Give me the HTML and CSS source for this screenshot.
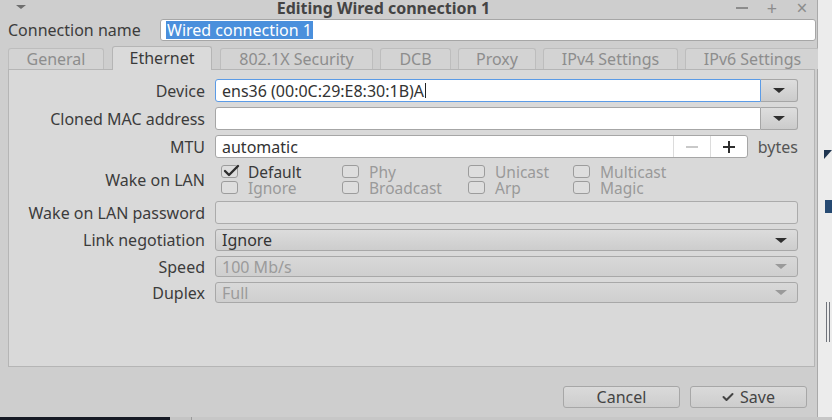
FILE: index.html
```html
<!DOCTYPE html>
<html>
<head>
<meta charset="utf-8">
<title>Editing Wired connection 1</title>
<link rel="stylesheet" href="styles.css">
</head>
<body>
<div class="screen">
  <div class="dialog">
    <div class="titlebar">
      <div class="tb-left"><span class="menu-arrow"></span></div>
      <div class="title">Editing Wired connection 1</div>
      <div class="wm-buttons">
        <span class="wm wm-min"></span>
        <span class="wm wm-max">+</span>
        <span class="wm wm-close">×</span>
      </div>
    </div>

    <div class="name-row">
      <span class="name-label">Connection name</span>
      <div class="entry name-entry"><span class="selected">Wired connection 1</span></div>
    </div>

    <div class="tabs">
      <div class="tab">General</div>
      <div class="tab active">Ethernet</div>
      <div class="tab">802.1X Security</div>
      <div class="tab">DCB</div>
      <div class="tab">Proxy</div>
      <div class="tab">IPv4 Settings</div>
      <div class="tab">IPv6 Settings</div>
    </div>

    <div class="panel">
      <div class="form">
        <div class="lbl">Device</div>
        <div class="combo-entry">
          <div class="entry focused">ens36 (00:0C:29:E8:30:1B)A<span class="caret"></span></div>
          <div class="combo-btn"><span class="arrow"></span></div>
        </div>

        <div class="lbl">Cloned MAC address</div>
        <div class="combo-entry">
          <div class="entry"></div>
          <div class="combo-btn"><span class="arrow"></span></div>
        </div>

        <div class="lbl">MTU</div>
        <div class="mtu">
          <div class="spin">
            <div class="spin-text">automatic</div>
            <div class="spin-btn minus"><span class="bar"></span></div>
            <div class="spin-btn plus"><span class="bar"></span><span class="bar vert"></span></div>
          </div>
          <span class="unit">bytes</span>
        </div>

        <div class="lbl">Wake on LAN</div>
        <div class="wol">
          <div class="chk on"><span class="box"><svg viewBox="0 0 18 14" width="18" height="14"><polyline points="3,7 7,11 16,2" fill="none" stroke="#2e2e2e" stroke-width="2.4" stroke-linecap="round" stroke-linejoin="round"/></svg></span>Default</div>
          <div class="chk"><span class="box"></span>Phy</div>
          <div class="chk"><span class="box"></span>Unicast</div>
          <div class="chk"><span class="box"></span>Multicast</div>
          <div class="chk"><span class="box"></span>Ignore</div>
          <div class="chk"><span class="box"></span>Broadcast</div>
          <div class="chk"><span class="box"></span>Arp</div>
          <div class="chk"><span class="box"></span>Magic</div>
        </div>

        <div class="lbl">Wake on LAN password</div>
        <div class="entry disabled"></div>

        <div class="lbl">Link negotiation</div>
        <div class="combo">Ignore<span class="arrow"></span></div>

        <div class="lbl">Speed</div>
        <div class="combo insensitive">100 Mb/s<span class="arrow"></span></div>

        <div class="lbl">Duplex</div>
        <div class="combo insensitive">Full<span class="arrow"></span></div>
      </div>
    </div>

    <div class="actions">
      <button class="btn">Cancel</button>
      <button class="btn"><svg class="save-check" viewBox="0 0 12 10" width="12" height="10"><polyline points="1.5,5 4.5,8 10.5,2" fill="none" stroke="#444" stroke-width="2" stroke-linecap="round" stroke-linejoin="round"/></svg>Save</button>
    </div>
  </div>

  <div class="side">
    <span class="side-tri"></span>
    <span class="side-block"></span>
    <span class="side-lines"></span>
  </div>
</div>
<div class="taskbar">
  <span class="tb-dark"></span>
  <span class="tb-gap"></span>
  <span class="tb-rest"></span>
</div>
</body>
</html>
```

FILE: styles.css
```css
html, body {
  margin: 0;
  padding: 0;
}

body {
  width: 832px;
  height: 420px;
  overflow: hidden;
  font-family: "Noto Sans", "Open Sans", sans-serif;
  font-size: 16px;
  color: #3a3a3a;
  background: #cfcfcf;
}

.screen {
  display: flex;
  height: 417px;
}

/* ---------- dialog frame ---------- */
.dialog {
  width: 818px;
  box-sizing: border-box;
  background: #cecece;
  border-right: 1px solid #a9a9a9;
  display: flex;
  flex-direction: column;
}

.titlebar {
  height: 16px;
  display: flex;
  align-items: flex-start;
}

.tb-left {
  width: 40px;
  height: 16px;
  padding-left: 16px;
  box-sizing: border-box;
  display: flex;
  align-items: center;
}

.menu-arrow {
  width: 0;
  height: 0;
  border-left: 5px solid transparent;
  border-right: 5px solid transparent;
  border-top: 4px solid #6e6e6e;
  margin-top: -3px;
}

.title {
  flex: 1;
  text-align: center;
  font-weight: bold;
  font-size: 16px;
  line-height: 16px;
  color: #444;
  white-space: nowrap;
}

.wm-buttons {
  width: 90px;
  height: 16px;
  display: flex;
  align-items: center;
}

.wm {
  width: 30px;
  text-align: center;
  color: #8c8c8c;
  font-size: 18px;
  line-height: 16px;
}

.wm-min {
  height: 2px;
  width: 12px;
  margin: 0 9px;
  background: #8c8c8c;
}

.wm-close {
  font-size: 19px;
}

/* ---------- connection name ---------- */
.name-row {
  display: flex;
  align-items: center;
  margin-top: 3px;
  padding-left: 8px;
  height: 22px;
}

.name-label {
  width: 152px;
  color: #3c3c3c;
}

.entry {
  box-sizing: border-box;
  height: 100%;
  background: #ffffff;
  border: 1px solid #a6a6a6;
  border-radius: 3px;
  padding: 0 6px;
  display: flex;
  align-items: center;
  color: #333;
  white-space: nowrap;
}

.name-entry {
  width: 656px;
  padding-left: 5px;
}

.selected {
  background: #4a8fdc;
  color: #ffffff;
  line-height: 18px;
  padding: 0 1px;
}

/* ---------- tabs ---------- */
.tabs {
  margin-top: 5px;
  height: 23px;
  padding-left: 8px;
  display: grid;
  grid-template-columns: 96px 100px 153px 70px 77px 134px 134px;
  column-gap: 8px;
  align-items: end;
}

.tabs .tab:nth-child(n+4) {
  margin-left: -1px;
}

.tab {
  box-sizing: border-box;
  height: 21px;
  background: #d3d3d3;
  border: 1px solid #bdbdbd;
  border-bottom: none;
  border-radius: 3px 3px 0 0;
  text-align: center;
  line-height: 20px;
  color: #8d8d8d;
}

.tab.active {
  height: 24px;
  background: #dadada;
  border-color: #b5b5b5;
  color: #3a3a3a;
  line-height: 23px;
  position: relative;
  z-index: 1;
  margin-bottom: -1px;
}

/* ---------- page panel ---------- */
.panel {
  flex: 1;
  margin-left: 8px;
  width: 807px;
  box-sizing: border-box;
  background: #d9d9d9;
  border: 1px solid #b5b5b5;
  padding: 9px 16px 0 0;
}

.form {
  display: grid;
  grid-template-columns: 196px 583px;
  grid-template-rows: 23px 23px 23px 33px 23px 22px 21px 21px;
  column-gap: 10px;
  row-gap: 5px;
}

.lbl {
  text-align: right;
  align-self: center;
  color: #3c3c3c;
  white-space: nowrap;
}

.combo-entry {
  display: flex;
}

.combo-entry .entry {
  flex: 1;
  border-radius: 3px 0 0 3px;
}

.entry.focused {
  border-color: #5b9be6;
}

.caret {
  display: inline-block;
  width: 1px;
  height: 15px;
  background: #222;
  margin-left: 1px;
}

.combo-btn {
  width: 37px;
  box-sizing: border-box;
  border: 1px solid #a6a6a6;
  border-left: none;
  border-radius: 0 3px 3px 0;
  background: linear-gradient(#dedede, #cbcbcb);
  display: flex;
  align-items: center;
  justify-content: center;
}

.arrow {
  width: 0;
  height: 0;
  border-left: 6px solid transparent;
  border-right: 6px solid transparent;
  border-top: 5px solid #2f2f2f;
}

/* ---------- MTU spin button ---------- */
.mtu {
  display: flex;
  align-items: center;
}

.spin {
  width: 534px;
  height: 100%;
  box-sizing: border-box;
  display: flex;
  background: #fff;
  border: 1px solid #a6a6a6;
  border-radius: 3px;
}

.spin-text {
  flex: 1;
  padding-left: 6px;
  display: flex;
  align-items: center;
  color: #333;
}

.spin-btn {
  width: 36px;
  border-left: 1px solid #dcdcdc;
  position: relative;
}

.spin-btn .bar {
  position: absolute;
  left: 12px;
  top: 10px;
  width: 12px;
  height: 2px;
  background: #2e2e2e;
}

.spin-btn .bar.vert {
  left: 17px;
  top: 5px;
  width: 2px;
  height: 12px;
}

.spin-btn.minus .bar {
  background: #c9c9c9;
}

.unit {
  margin-left: 10px;
  color: #555;
}

/* ---------- wake on LAN checks ---------- */
.wol {
  display: grid;
  grid-template-columns: 121px 126px 105px auto;
  grid-template-rows: 16px 16px;
  padding-left: 6px;
  align-content: center;
}

.chk {
  display: flex;
  align-items: center;
  color: #9a9a9a;
  white-space: nowrap;
  font-size: 15.5px;
  line-height: 16px;
}

.chk.on {
  color: #3a3a3a;
}

.box {
  box-sizing: border-box;
  width: 17px;
  height: 13px;
  border: 1px solid #9c9c9c;
  border-radius: 3px;
  background: #dedede;
  margin-right: 10px;
  position: relative;
  flex: none;
}

.box svg {
  position: absolute;
  left: 0;
  top: -2px;
}

/* ---------- insensitive widgets ---------- */
.entry.disabled {
  background: #dfdfdf;
  border-color: #ababab;
}

.combo {
  box-sizing: border-box;
  border: 1px solid #a8a8a8;
  border-radius: 3px;
  background: linear-gradient(#dcdcdc, #cdcdcd);
  display: flex;
  align-items: center;
  justify-content: space-between;
  padding: 0 10px 0 6px;
  color: #333;
}

.combo.insensitive {
  color: #9b9b9b;
  background: linear-gradient(#d8d8d8, #cfcfcf);
}

.combo.insensitive .arrow {
  border-top-color: #9a9a9a;
}

/* ---------- dialog buttons ---------- */
.actions {
  height: 50px;
  box-sizing: border-box;
  padding: 19px 10px 0 0;
  display: flex;
  justify-content: flex-end;
  align-items: flex-start;
  column-gap: 10px;
}

.btn {
  width: 117px;
  height: 22px;
  box-sizing: border-box;
  border: 1px solid #a7a7a7;
  border-radius: 3px;
  background: linear-gradient(#dadada, #cdcdcd);
  font: inherit;
  color: #444;
  display: flex;
  align-items: center;
  justify-content: center;
  padding: 0;
}

.save-check {
  margin-right: 6px;
}

/* ---------- desktop behind the dialog ---------- */
.side {
  flex: 1;
  background: #ececec;
  position: relative;
}

.side-tri {
  position: absolute;
  left: 6px;
  top: 150px;
  width: 0;
  height: 0;
  border-left: 8px solid #1f3550;
  border-bottom: 9px solid transparent;
}

.side-block {
  position: absolute;
  left: 7px;
  top: 200px;
  width: 7px;
  height: 13px;
  background: #264a72;
}

.side-lines {
  position: absolute;
  left: 8px;
  top: 302px;
  width: 6px;
  height: 40px;
  background: repeating-linear-gradient(90deg, #3a3f4a 0 1px, transparent 1px 3px);
  opacity: 0.7;
}

.taskbar {
  height: 3px;
  display: flex;
}

.tb-dark {
  width: 170px;
  background: #161a25;
}

.tb-gap {
  width: 21px;
  background: #c4c4c4;
  border-right: 1px solid #9a9a9a;
}

.tb-rest {
  flex: 1;
  background: #c7c7c7;
}
```
